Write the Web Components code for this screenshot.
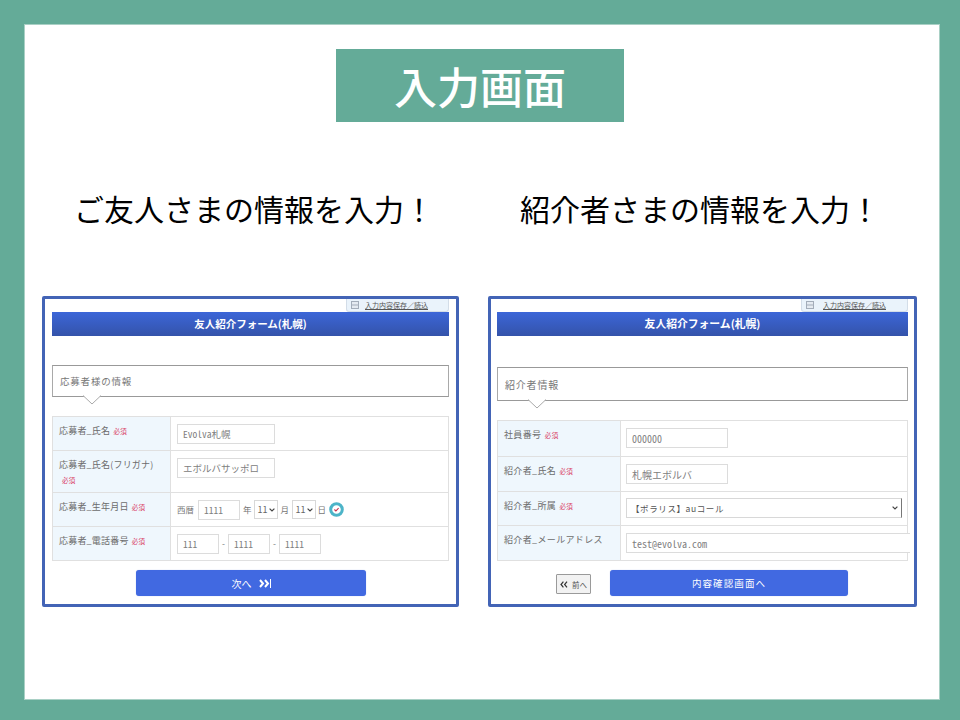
<!DOCTYPE html>
<html lang="ja">
<head>
<meta charset="utf-8">
<title>入力画面</title>
<style>
  html, body { margin: 0; padding: 0; }
  body {
    width: 960px; height: 720px; overflow: hidden;
    background: #64ab98;
    font-family: "Noto Sans CJK JP", "Noto Sans", sans-serif;
  }
</style>
</head>
<body>
<x-slide>
  <span slot="title">入力画面</span>

  <x-column heading="ご友人さまの情報を入力&#xFF01;" indent="32">
    <x-panel width="417" pad="7" section="応募者様の情報" section-gap="29" section-h="32" tab-w="103" tab-gap="6"
      style="--bar-size:10.5px;--label-track:.2px;--sec-size:9.5px;--body-pad:6px;--label-top:6px;--field-size:9.5px">
      <x-row h="34" lw="118"><span slot="label">応募者_氏名 <x-req></x-req></span>
        <x-field w="98">Evolva札幌</x-field></x-row>
      <x-row h="42" lw="118"><span slot="label">応募者_氏名(フリガナ)<br><x-req style="margin-left:3px"></x-req></span>
        <x-field w="98">エボルバサッポロ</x-field></x-row>
      <x-row h="34" lw="118"><span slot="label">応募者_生年月日 <x-req></x-req></span>
        <x-txt>西暦</x-txt><x-field w="42" ml="4">1111</x-field><x-txt ml="3">年</x-txt><x-pick ml="2">11</x-pick><x-txt ml="3">月</x-txt><x-pick ml="2.5">11</x-pick><x-txt ml="2">日</x-txt><x-cal></x-cal></x-row>
      <x-row h="34" lw="118"><span slot="label">応募者_電話番号 <x-req></x-req></span>
        <x-field w="42">111</x-field><x-txt ml="3" w="6">-</x-txt><x-field w="42">1111</x-field><x-txt ml="3" w="6">-</x-txt><x-field w="42">1111</x-field></x-row>
      <x-actions slot="actions" pad="84">
        <x-go w="230" chev>次へ</x-go>
      </x-actions>
    </x-panel>
  </x-column>

  <x-column heading="紹介者さまの情報を入力&#xFF01;" indent="32">
    <x-panel width="429" pad="6" section="紹介者情報" section-gap="31" section-h="34" tab-w="107" tab-gap="9"
      style="--bar-size:10.8px;--label-track:.35px;--sec-size:10px;--body-pad:5px;--label-top:5.5px;--field-size:10px">
      <x-row h="36" lw="123"><span slot="label">社員番号 <x-req></x-req></span>
        <x-field w="102">000000</x-field></x-row>
      <x-row h="35" lw="123"><span slot="label">紹介者_氏名 <x-req></x-req></span>
        <x-field w="102">札幌エボルバ</x-field></x-row>
      <x-row h="34" lw="123"><span slot="label">紹介者_所属 <x-req></x-req></span>
        <x-pick w="276" wide style="margin-top:-1px">【ポラリス】auコール</x-pick></x-row>
      <x-row h="35" lw="123"><span slot="label">紹介者_メールアドレス</span>
        <x-field w="284" style="border-right:0">test@evolva.com</x-field></x-row>
      <x-actions slot="actions" pad="59">
        <x-back>前へ</x-back>
        <x-go w="238" ml="19" track>内容確認画面へ</x-go>
      </x-actions>
    </x-panel>
  </x-column>
</x-slide>

<script>
// small helper, every element below uses the same shape
function define(name, css, html, setup) {
  customElements.define(name, class extends HTMLElement {
    connectedCallback() {
      if (this.shadowRoot) return;
      this.attachShadow({ mode: 'open' });
      this.shadowRoot.innerHTML = `<style>${css}</style>${typeof html === 'function' ? html(this) : html}`;
      if (setup) setup(this);
    }
  });
}

const attrPx = (el, name, prop) => {
  if (el.hasAttribute(name)) el.style[prop] = el.getAttribute(name) + 'px';
};

define('x-slide', `
  :host {
    display: flex; flex-direction: column;
    box-sizing: border-box;
    width: 914px; height: 674px;
    margin: 25px 0 0 25px;
    background: #fff;
    box-shadow: 0 0 0 1px #a9d0c5;
  }
  .title {
    box-sizing: border-box;
    width: 288px; height: 73px;
    margin: 24px 0 0 311px;
    display: flex; align-items: center; justify-content: center;
    background: #64ab98; color: #fff;
    font-size: 43px; font-weight: 500; line-height: 1;
  }
  .cols { display: flex; gap: 29px; padding-left: 17px; margin-top: 61px; }
`, `
  <div class="title"><slot name="title"></slot></div>
  <div class="cols"><slot></slot></div>
`);

define('x-column', `
  :host { display: block; }
  h2 {
    margin: 0 0 63px;
    height: 50px; line-height: 50px;
    font-size: 30px; font-weight: 400; color: #000;
    white-space: nowrap;
  }
`, el => `<h2 style="padding-left:${el.getAttribute('indent')}px">${el.getAttribute('heading')}</h2><slot></slot>`);

define('x-panel', `
  :host {
    display: block; box-sizing: border-box;
    height: 311px;
    border: 3px solid #4364b6; border-radius: 2px;
    background: #fff; overflow: hidden;
  }
  .tab {
    display: flex; align-items: center;
    box-sizing: border-box;
    height: 13px; margin-left: auto;
    padding-left: 4px;
    background: #eaf3fb;
    border: 1px solid #d3dde8; border-top: 0; border-radius: 0 0 3px 3px;
    color: #555; font-size: 7px; text-decoration: underline;
  }
  .bar {
    height: 24px; line-height: 23px; text-align: center;
    background: linear-gradient(#3c66d8, #3453aa);
    color: #fff; font-size: var(--bar-size); font-weight: 700;
  }
  .sec {
    position: relative; box-sizing: border-box;
    display: flex; align-items: center;
    padding-left: 7px;
    background: #fff;
    border: 1px solid #a9a9a9; border-top-color: #999; border-bottom-color: #999;
    color: #777; font-size: var(--sec-size); letter-spacing: .8px;
  }
  .sec svg { position: absolute; left: 30px; top: 100%; margin-top: -1px; }
  .table { margin-top: 19px; border: 1px solid #e0e0e0; border-bottom: 0; }
`, el => `
  <div class="tab" style="width:${el.getAttribute('tab-w')}px">
    <svg style="margin-right:${el.getAttribute('tab-gap')}px" width="8" height="8" viewBox="0 0 8 8"><rect x=".5" y=".5" width="7" height="7" fill="#e4eaf1" stroke="#a3adba"/><path d="M1 4h6" stroke="#a3adba"/></svg>
    <span>入力内容保存&#xFF0F;読込</span>
  </div>
  <div class="bar">友人紹介フォーム(札幌)</div>
  <div class="sec" style="margin-top:${el.getAttribute('section-gap')}px;height:${el.getAttribute('section-h')}px">
    ${el.getAttribute('section')}
    <svg width="18" height="10" viewBox="0 0 18 10"><path d="M0 0.5L9 9L18 0.5" fill="#fff" stroke="#a9a9a9"/></svg>
  </div>
  <div class="table"><slot></slot></div>
  <slot name="actions"></slot>
`, el => {
  el.style.width = el.getAttribute('width') + 'px';
  el.style.paddingLeft = el.style.paddingRight = el.getAttribute('pad') + 'px';
});

define('x-row', `
  :host {
    display: grid; box-sizing: border-box;
    border-bottom: 1px solid #e0e0e0;
    font-size: 9px; color: #6c6c6c;
  }
  .label {
    padding: var(--label-top) 0 0 6px;
    background: #eff7fd;
    border-right: 1px solid #e0e0e0;
    line-height: 15px; letter-spacing: var(--label-track);
  }
  .body { display: flex; align-items: flex-start; padding: 7px 0 0 var(--body-pad); min-width: 0; }
`, `
  <div class="label"><slot name="label"></slot></div>
  <div class="body"><slot></slot></div>
`, el => {
  el.style.height = el.getAttribute('h') + 'px';
  el.style.gridTemplateColumns = el.getAttribute('lw') + 'px 1fr';
});

define('x-req', `
  :host { display: inline; color: #d93a63; font-size: 6.5px; margin-left: 1px; }
`, '必須');

define('x-field', `
  :host {
    display: flex; align-items: center; flex: none;
    box-sizing: border-box; height: 20px;
    padding-left: 5px;
    border: 1px solid #dcdcdc;
    background: #fff; color: #808080;
    font-size: var(--field-size); font-feature-settings: "hwid"; white-space: nowrap;
  }
`, '<slot></slot>', el => {
  attrPx(el, 'w', 'width');
  attrPx(el, 'ml', 'marginLeft');
});

define('x-txt', `
  :host { display: inline-block; flex: none; color: #777; font-size: 8.5px; line-height: 19px; }
`, '<slot></slot>', el => {
  attrPx(el, 'w', 'width');
  attrPx(el, 'ml', 'marginLeft');
});

define('x-pick', `
  :host {
    display: flex; align-items: center; justify-content: space-between; flex: none;
    box-sizing: border-box; width: 24px; height: 19px;
    padding: 0 2px 0 3px;
    border: 1px solid #d8d8d8; background: #fff; color: #666;
    font-size: 9px; white-space: nowrap;
  }
  :host([wide]) {
    height: 20px;
    padding: 0 3px 0 4px;
    border-right: 1px solid #777;
    font-size: 8.5px; letter-spacing: .6px; color: #555;
  }
`, `<slot></slot><svg width="6" height="4" viewBox="0 0 6 4"><path d="M.6.6L3 3L5.4.6" fill="none" stroke="#444" stroke-width="1.2"/></svg>`, el => {
  attrPx(el, 'w', 'width');
  attrPx(el, 'ml', 'marginLeft');
});

define('x-cal', `
  :host { display: block; flex: none; width: 15px; height: 15px; margin: 2px 0 0 3px; }
`, `<svg width="15" height="15" viewBox="0 0 15 15">
  <circle cx="7.5" cy="7.5" r="5.8" fill="#fff" stroke="#4cb4c8" stroke-width="3"/>
  <path d="M5.4 7.5L6.9 9L9.6 6.2" fill="none" stroke="#c8314f" stroke-width="1.1"/>
</svg>`);

define('x-actions', `
  :host { display: flex; align-items: flex-start; margin-top: 9px; }
`, '<slot></slot>', el => attrPx(el, 'pad', 'paddingLeft'));

define('x-go', `
  :host {
    display: flex; align-items: center; justify-content: center; gap: 7px;
    box-sizing: border-box; height: 26px;
    background: #4169e1; border-radius: 3px;
    color: #fff; font-size: 10px;
    box-shadow: 0 0 1px #9db1ea;
  }
  :host([track]) { font-size: 9.5px; letter-spacing: 1.1px; }
  svg { display: block; }
`, el => `<slot></slot>${el.hasAttribute('chev') ? `<svg width="12" height="9" viewBox="0 0 12 9"><path d="M1 1L4 4.5L1 8M6 1L9 4.5L6 8" fill="none" stroke="#fff" stroke-width="2"/><path d="M11.5 0V9" stroke="#fff"/></svg>` : ''}`, el => {
  attrPx(el, 'w', 'width');
  attrPx(el, 'ml', 'marginLeft');
});

define('x-back', `
  :host {
    display: flex; align-items: center; justify-content: center; gap: 4px;
    box-sizing: border-box; width: 35px; height: 20px; margin-top: 4px;
    background: #f2f2f2; border: 1px solid #9a9a9a; border-radius: 1px;
    color: #555; font-size: 7.5px;
  }
`, `<svg width="8" height="7" viewBox="0 0 8 7"><path d="M3.4 .6L1 3.5L3.4 6.4M7 .6L4.6 3.5L7 6.4" fill="none" stroke="#333" stroke-width="1.2"/></svg><slot></slot>`);
</script>
</body>
</html>
